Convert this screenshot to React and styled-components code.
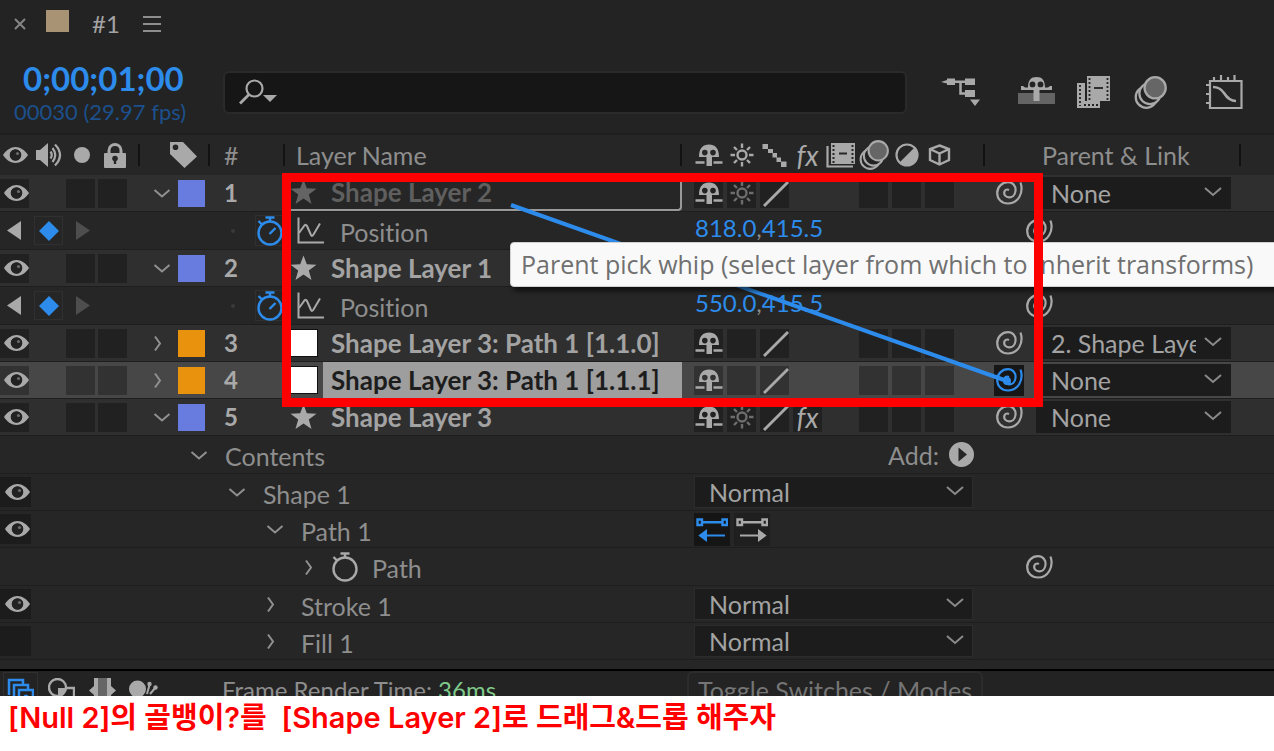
import { Fragment } from "react";
import styled, { createGlobalStyle, css } from "styled-components";

const COLORS = {
  panel: "#232323",
  layer: "#2f2f2f",
  property: "#262626",
  selected: "#474747",
  cell: "#212121",
  field: "#1c1c1c",
  line: "#1e1e1e",
  icon: "#a9a9a9",
  text: "#8e8e8e",
  name: "#a3a3a3",
  blue: "#2d8ceb",
  red: "#ff0000",
};

const GlobalStyle = createGlobalStyle`
  * {
    box-sizing: border-box;
  }

  body {
    margin: 0;
    background: #ffffff;
    font-family: Lato, "Liberation Sans", sans-serif;
    font-variant-ligatures: none;
  }

  button,
  input,
  select {
    margin: 0;
    padding: 0;
    border: 0;
    background: none;
    color: inherit;
    font: inherit;
  }

  svg {
    display: block;
    flex: none;
  }
`;

const Page = styled.main`
  overflow: hidden;
`;

const Panel = styled.section`
  position: relative;
  background: ${COLORS.panel};
  color: ${COLORS.text};
  font-size: 25px;
  line-height: 30px;
`;

const TabBar = styled.header`
  display: flex;
  align-items: center;
  height: 48px;
  padding-left: 14px;
`;

const CloseButton = styled.button`
  display: flex;
  width: 32px;
  color: #858585;
`;

const TabSwatch = styled.span`
  width: 23px;
  height: 22px;
  margin: 0 23px 6px 0;
  background: #a89474;
`;

const TabTitle = styled.h1`
  margin: 0 23px 0 0;
  font-size: 24px;
  font-weight: 400;
  line-height: 30px;
  color: ${COLORS.name};
`;

const Toolbar = styled.div`
  display: flex;
  align-items: center;
  height: 85px;
  padding: 3px 31px 0 0;
`;

const TimeBlock = styled.div`
  display: flex;
  flex-direction: column;
  width: 223px;
  padding: 2px 0 0 14px;
`;

const Timecode = styled.button`
  padding-left: 9px;
  font-size: 33px;
  font-weight: 700;
  line-height: 38px;
  text-align: left;
  color: ${COLORS.blue};
`;

const FrameInfo = styled.span`
  font-size: 22px;
  line-height: 30px;
  color: #1b508c;
`;

const SearchBox = styled.label`
  display: flex;
  align-items: center;
  flex: 1;
  height: 43px;
  padding-left: 14px;
  border: 2px solid #2a2a2a;
  border-radius: 6px;
  background: #161616;
  color: ${COLORS.icon};
`;

const SearchInput = styled.input`
  flex: 1;
  min-width: 0;
  margin-left: 8px;
  outline: none;
`;

const ToolGroup = styled.div`
  display: flex;
  align-items: center;
  gap: 27px;
  padding-left: 34px;
  color: ${COLORS.icon};
`;

const ToolSet = styled.div`
  display: flex;
`;

const ToolButton = styled.button`
  display: flex;
  justify-content: center;
  min-width: ${({ $wide }) => ($wide ? "57px" : "37px")};
`;

const Table = styled.table`
  display: block;
  padding-bottom: 9px;
  background: ${COLORS.property};

  thead,
  tbody {
    display: block;
  }
`;

const rowGrid = css`
  display: grid;
  grid-template-columns: 140px 70px 75px 397px 303px 256px 1fr;
`;

const HeadRow = styled.tr`
  ${rowGrid}
  height: 42px;
  border-top: 2px solid ${COLORS.line};
  color: ${COLORS.icon};
`;

const HeadCell = styled.th`
  display: flex;
  align-items: center;
  padding: 0 0 0 ${({ $pad }) => $pad || 0}px;
  font-weight: 400;
  text-align: left;
  color: ${({ $text }) => ($text ? COLORS.text : "inherit")};

  &::after {
    content: "";
    width: 2px;
    height: 22px;
    margin-left: auto;
    background: #121212;
  }
`;

const Row = styled.tr`
  ${rowGrid}
  height: ${({ $tall }) => ($tall ? 38 : 37)}px;
  border-bottom: 1px solid ${COLORS.line};
  background: ${({ $kind }) => COLORS[$kind]};
  color: ${({ $kind }) => ($kind === "property" ? COLORS.text : COLORS.icon)};
`;

const Cell = styled.td`
  display: flex;
  align-items: center;
  min-width: 0;
  padding: 0 0 0 ${({ $pad }) => $pad || 0}px;
  grid-column: span ${({ $span }) => $span || 1};
`;

const Slots = styled.div`
  display: grid;
  grid-template-columns: 32px 34px 32px 34px;
  align-items: center;
`;

const HeadSlot = styled.span`
  display: flex;
  justify-content: center;
`;

const Switch = styled.button`
  display: flex;
  align-items: center;
  justify-content: center;
  width: 29px;
  height: 29px;
  visibility: ${({ $hidden }) => ($hidden ? "hidden" : "visible")};
  background: ${({ $selected }) => ($selected ? "#323232" : COLORS.cell)};
  color: ${({ $dim }) => ($dim ? "#6d6d6d" : COLORS.icon)};
`;

const EyeSwitch = styled(Switch)`
  ${({ $large }) =>
    $large &&
    css`
      width: 31px;
      height: 30px;
      background: ${COLORS.field};
    `}
`;

const Switches = styled.div`
  display: grid;
  grid-template-columns: repeat(8, 29px);
  gap: 4px;
  align-items: center;
  justify-items: center;
`;

const FxMark = styled.span`
  font-size: 28px;
  font-style: italic;
  line-height: 28px;
`;

const Twirl = styled.button`
  display: flex;
  flex: none;
  width: ${({ $width }) => $width || 38}px;
  color: #909090;
`;

const LabelSwatch = styled.button`
  width: 27px;
  height: 27px;
  background: ${({ $color }) => $color};
`;

const LayerNumber = styled.span`
  font-size: 24px;
  font-weight: 700;
`;

const NameCell = styled(Cell)`
  align-items: stretch;
  ${({ $target }) =>
    $target &&
    css`
      border: solid #999999;
      border-width: 0 2px 2px 0;
      border-radius: 0 0 4px 0;
      background: ${COLORS.property};
      color: #646464;
    `}
`;

const NameIcon = styled.span`
  display: flex;
  align-items: center;
  width: 38px;
  padding-left: 5px;
`;

const LayerName = styled.span`
  display: flex;
  align-items: center;
  flex: 1;
  padding-left: 8px;
  font-size: 26px;
  font-weight: 700;
  white-space: nowrap;
  color: ${({ $target }) => ($target ? "#5f5f5f" : COLORS.name)};
  ${({ $selected }) =>
    $selected &&
    css`
      background: #9e9e9e;
      color: #1d1d1d;
    `}
`;

const NullSwatch = styled.span`
  width: 28px;
  height: 28px;
  border: 1px solid #111111;
  background: #ffffff;
`;

const KeyNav = styled.div`
  display: grid;
  grid-template-columns: 20px 29px 20px;
  gap: 10px;
  align-items: center;
`;

const KeyButton = styled.button`
  display: flex;
  align-items: center;
  justify-content: center;
  height: 29px;
  border: ${({ $framed }) => ($framed ? "1px solid #303030" : 0)};
  color: ${({ $color }) => $color || COLORS.icon};
`;

const Dot = styled.span`
  width: 4px;
  height: 4px;
  margin-right: 20px;
  border-radius: 2px;
  background: #3a3a3a;
`;

const WatchButton = styled.button`
  display: flex;
  align-items: center;
  justify-content: center;
  width: ${({ $framed }) => ($framed ? 30 : 26)}px;
  height: 31px;
  border: ${({ $framed }) => ($framed ? "1px solid #303030" : 0)};
  color: ${({ $active }) => ($active ? COLORS.blue : COLORS.icon)};
`;

const GraphButton = styled.button`
  display: flex;
  width: 43px;
  margin-left: 12px;
  color: ${COLORS.icon};
`;

const PropertyName = styled.span`
  padding: 3px 0 0 ${({ $pad }) => $pad || 0}px;
`;

const Values = styled.div`
  display: flex;
  padding-bottom: 6px;
  font-size: 24px;
  color: ${COLORS.text};
`;

const Value = styled.button`
  color: ${COLORS.blue};
`;

const AddButton = styled.button`
  display: flex;
  align-items: center;
  gap: 10px;
  margin-left: auto;
  margin-right: 11px;
`;

const WhipButton = styled.button`
  display: flex;
  align-items: center;
  justify-content: center;
  width: 30px;
  height: 31px;
  margin-right: 12px;
  color: ${({ $active }) => ($active ? COLORS.blue : COLORS.icon)};
  background: ${({ $active }) => ($active ? "#161616" : "none")};
`;

const SelectWrap = styled.div`
  position: relative;
  width: ${({ $width }) => $width}px;
  color: ${COLORS.name};

  svg {
    position: absolute;
    top: 10px;
    right: 9px;
    color: #8a8a8a;
    pointer-events: none;
  }
`;

const SelectField = styled.select`
  display: block;
  width: 100%;
  height: 32px;
  padding: 0 34px 0 14px;
  appearance: none;
  border: 1px solid ${({ $framed }) => ($framed ? "#2c2c2c" : COLORS.field)};
  background: ${COLORS.field};
  line-height: 28px;
  outline: none;
`;

const DirectionButton = styled.button`
  display: flex;
  align-items: center;
  justify-content: center;
  width: 36px;
  height: 33px;
  margin-right: 4px;
  background: ${({ $active }) => ($active ? "#151515" : "#1f1f1f")};
  color: ${({ $active }) => ($active ? COLORS.blue : COLORS.icon)};
`;

const Footer = styled.footer`
  display: flex;
  align-items: flex-start;
  height: 27px;
  overflow: hidden;
  border-top: 2px solid #000000;
  font-size: 24px;
`;

const FooterTools = styled.div`
  display: flex;
  gap: 6px;
  width: 222px;
  padding: 1px 0 0 3px;
  color: ${COLORS.icon};
`;

const FooterButton = styled.button`
  display: flex;
  justify-content: center;
  width: 35px;
  height: 36px;
  padding-top: 5px;
  border: 1px solid ${({ $active }) => ($active ? "#303030" : "transparent")};
  color: ${({ $active }) => ($active ? COLORS.blue : "inherit")};
`;

const RenderTime = styled.p`
  width: 465px;
  margin: 0;
  padding-top: 4px;

  output {
    color: #7fc98a;
  }
`;

const ToggleButton = styled.button`
  height: 40px;
  padding: 2px 9px 8px;
  border: 2px solid #2c2c2c;
  border-radius: 6px;
  font-size: 25px;
  white-space: nowrap;
  color: #757575;
`;

const DragLine = styled.svg`
  position: absolute;
  top: 173px;
  left: 282px;
  pointer-events: none;
`;

const Tooltip = styled.div`
  position: absolute;
  top: 242px;
  left: 510px;
  min-width: 780px;
  padding: 0 10px;
  border: 1px solid #d0d0d0;
  border-radius: 4px;
  background: #f9f9f9;
  box-shadow: 3px 4px 5px rgba(0, 0, 0, 0.6);
  font-family: "Open Sans", sans-serif;
  font-size: 25px;
  line-height: 43px;
  white-space: nowrap;
  color: #707070;
`;

const Highlight = styled.div`
  position: absolute;
  top: 173px;
  left: 282px;
  width: 761px;
  height: 234px;
  border: 9px solid ${COLORS.red};
  pointer-events: none;
`;

const Caption = styled.p`
  margin: 0;
  padding: 0 8px;
  font-family: Inter, "Noto Sans CJK KR", sans-serif;
  font-size: 29px;
  font-weight: 600;
  line-height: 44px;
  white-space: pre-wrap;
  color: ${COLORS.red};
`;

const EyeIcon = () => (
  <svg width="28" height="18" viewBox="0 0 28 18">
    <path
      fill="currentColor"
      fillRule="evenodd"
      d="M3 9C6 4 11 1 15.500 1S25 4 28 9C25 14 20 17 15.500 17S6 14 3 9ZM15.500 3.500A5.500 5.500 0 1 0 15.500 14.500A5.500 5.500 0 1 0 15.500 3.500Z"
    />
    <circle cx="15.500" cy="9" r="5.800" fill="#222222" />
    <circle cx="17.500" cy="7.500" r="1.600" fill="#6a6a6a" />
  </svg>
);

const SpeakerIcon = () => (
  <svg width="28" height="26" viewBox="0 0 28 26" fill="none" stroke="currentColor" strokeWidth="2.200">
    <path d="M1 8H5L13 1V25L5 18H1Z" fill="currentColor" stroke="none" />
    <path d="M15.500 9.500Q18 13 15.500 16.500" />
    <path d="M17.500 6Q23 13 17.500 20" />
    <path d="M20 2.500Q30 13 20 23.500" />
  </svg>
);

const SoloIcon = () => (
  <svg width="16" height="16" viewBox="0 0 16 16">
    <circle cx="8" cy="8" r="8" fill="currentColor" />
  </svg>
);

const LockIcon = () => (
  <svg width="22" height="25" viewBox="0 0 22 25">
    <path d="M5 11V7.500C5 -0.500 17 -0.500 17 7.500V11" fill="none" stroke="currentColor" strokeWidth="3" />
    <rect y="10" width="22" height="15" rx="1" fill="currentColor" />
    <circle cx="11" cy="15.500" r="2.800" fill="#262626" />
    <path d="M9.800 16H12.200V21H9.800Z" fill="#262626" />
  </svg>
);

const TagIcon = () => (
  <svg width="27" height="26" viewBox="0 0 27 26">
    <path
      fill="currentColor"
      fillRule="evenodd"
      d="M0 0H13L27 14.500L14.500 26L0 12ZM5.500 2.500A2.800 2.800 0 1 0 5.500 8.100A2.800 2.800 0 1 0 5.500 2.500Z"
    />
  </svg>
);

const ShyIcon = () => (
  <svg width="28" height="23" viewBox="0 0 28 23">
    <path
      fill="currentColor"
      fillRule="evenodd"
      d="M4 13C4 4 8 0.500 14 0.500S24 4 24 13H17V22H11.500V13ZM9.800 5.800A2.800 2.800 0 1 0 9.800 11.400A2.800 2.800 0 1 0 9.800 5.800ZM18 5.800A2.800 2.800 0 1 0 18 11.400A2.800 2.800 0 1 0 18 5.800Z"
    />
    <path d="M0.500 18.500H9.500M18.500 18.500H27.500" stroke="currentColor" strokeWidth="2.500" />
  </svg>
);

const SunIcon = () => (
  <svg width="24" height="24" viewBox="0 0 24 24" fill="none" stroke="currentColor" strokeWidth="2.400">
    <circle cx="12" cy="12" r="4.500" />
    <path d="M12 0.500V5M12 19V23.500M0.500 12H5M19 12H23.500M4 4L7 7M17 17L20 20M20 4L17 7M7 17L4 20" />
  </svg>
);

const QualityIcon = () => (
  <svg width="25" height="25" viewBox="0 0 25 25" fill="currentColor">
    <path d="M0.500 1H6V6H0.500ZM6 6H11V10H6ZM10.500 10H15V14.500H10.500ZM14.500 14.500H19V19H14.500ZM19 18.500H24.500V24H19Z" />
  </svg>
);

const SlashIcon = () => (
  <svg width="29" height="29" viewBox="0 0 29 29">
    <path d="M4 27L28 3" stroke="currentColor" strokeWidth="2.800" />
  </svg>
);

const FrameBlendIcon = () => (
  <svg width="29" height="26" viewBox="0 0 29 26">
    <path d="M1.500 4V24.500H27" fill="none" stroke="currentColor" strokeWidth="2.200" />
    <rect x="5" y="1" width="24" height="21" fill="currentColor" />
    <path d="M7.500 3V21M26.500 3V21" stroke="#262626" strokeWidth="2" strokeDasharray="2 2" />
    <path d="M13 11.500H21" stroke="#262626" strokeWidth="2" />
  </svg>
);

const MotionBlurIcon = ({ size = 30 }) => (
  <svg width={size} height={size} viewBox="0 0 32 32" stroke="currentColor" strokeWidth="2.200">
    <circle cx="12" cy="20.500" r="10.300" fill="#232323" />
    <circle cx="15.500" cy="17" r="10.300" fill="#232323" />
    <circle cx="20.500" cy="11.500" r="10.300" fill="#666666" />
  </svg>
);

const AdjustmentIcon = () => (
  <svg width="24" height="24" viewBox="0 0 24 24">
    <circle cx="12" cy="12" r="10.500" fill="none" stroke="currentColor" strokeWidth="2.200" />
    <path d="M19.500 4.500A10.600 10.600 0 0 1 4.500 19.500Z" fill="currentColor" />
  </svg>
);

const CubeIcon = () => (
  <svg width="23" height="22" viewBox="0 0 23 22" fill="none" stroke="currentColor" strokeWidth="2.400">
    <path d="M11.500 1.500L21 5V16L11.500 20.500L2 16V5ZM2 5L11.500 9.500L21 5M11.500 9.500V20.500" />
  </svg>
);

const TwirlIcon = ({ open }) => (
  <svg width="22" height="18" viewBox="0 0 22 18" fill="none" stroke="currentColor" strokeWidth="2">
    <path d={open ? "M4.500 6L12 12.500L19.500 6" : "M5 2.500L10 9.500L5 16.500"} />
  </svg>
);

const ChevronIcon = () => (
  <svg width="18" height="10" viewBox="0 0 18 10" fill="none" stroke="currentColor" strokeWidth="2">
    <path d="M1 1L9 8L17 1" />
  </svg>
);

const StarIcon = () => (
  <svg width="27" height="26" viewBox="0 0 27 26">
    <path
      d="M13.500 0.500L16.800 9.200L26.500 9.700L18.800 15.500L21.500 25L13.500 19.500L5.500 25L8.200 15.500L0.500 9.700L10.200 9.200Z"
      fill="currentColor"
    />
  </svg>
);

const WatchIcon = ({ running }) => (
  <svg width="26" height="30" viewBox="0 0 26 30" fill="none" stroke="currentColor" strokeWidth="2.400">
    <circle cx="13" cy="17" r="11.500" />
    <path d="M8.500 1.500H17.500M13 1.500V5.500M1.500 5L5 8.500" />
    {running && <path d="M12.500 18L18.500 12" />}
  </svg>
);

const GraphIcon = () => (
  <svg width="27" height="27" viewBox="0 0 27 27" fill="none" stroke="currentColor" strokeWidth="2">
    <path d="M1.500 0.500V25.500H27" />
    <path d="M2 16L7.500 8.500Q9 7 10 9L14 18Q15 20 16.500 17.500L23 6.500" />
  </svg>
);

const WhipIcon = () => (
  <svg width="27" height="24" viewBox="0 0 27 24" fill="none" stroke="currentColor" strokeWidth="2.200">
    <path d="M24.500 1.500C28 12 22 22.500 12 22.500C5.500 22.500 1.200 18 1.200 12C1.200 6 6 1.200 12 1.200C17 1.200 20 5 19.500 10C19 14.500 16 16.500 13 16.300C10 16 8 14 8.200 11.500C8.500 9 10.500 7.800 13 9" />
  </svg>
);

const PlayIcon = () => (
  <svg width="25" height="25" viewBox="0 0 25 25">
    <circle cx="12.500" cy="12.500" r="12.500" fill={COLORS.icon} />
    <path d="M9.500 5.500L18 12.500L9.500 19.500Z" fill="#262626" />
  </svg>
);

const DirectionIcon = ({ reverse }) => (
  <svg width="32" height="25" viewBox="0 0 32 25" fill="none" stroke="currentColor" strokeWidth="2.400">
    <path d="M1.500 2.500H6V8H1.500ZM26.500 2.500H31V8H26.500ZM6 5.200H26.500" />
    {reverse ? (
      <path d="M4 18.500L10 14V23ZM10 18.500H29" fill="currentColor" strokeWidth="2" />
    ) : (
      <path d="M29 18.500L23 14V23ZM22 18.500H4" fill="currentColor" strokeWidth="2" />
    )}
  </svg>
);

const MenuIcon = () => (
  <svg width="18" height="18" viewBox="0 0 18 18" stroke="currentColor" strokeWidth="2">
    <path d="M0 2H18M0 9H18M0 16H18" />
  </svg>
);

const CloseIcon = () => (
  <svg width="12" height="12" viewBox="0 0 12 12" stroke="currentColor" strokeWidth="2">
    <path d="M1 1L11 11M11 1L1 11" />
  </svg>
);

const SearchIcon = () => (
  <svg width="38" height="26" viewBox="0 0 38 26">
    <circle cx="15.500" cy="9.500" r="8" fill="none" stroke="currentColor" strokeWidth="2.200" />
    <path d="M10 15.500L1 24.500" stroke="currentColor" strokeWidth="2.800" />
    <path d="M24 16H38L31 23Z" fill="currentColor" />
  </svg>
);

const FlowIcon = () => (
  <svg width="40" height="30" viewBox="0 0 40 30" fill="currentColor">
    <path d="M0 5L6 3V1.500H14V8H6V6.500ZM24 1.500H34V8H24ZM24 13H34V20H24ZM29 22.500H39L34 29Z" />
    <path d="M14 4.700H24M19.500 4.700V16.500H24" fill="none" stroke="currentColor" strokeWidth="2.500" />
  </svg>
);

const HideShyIcon = () => (
  <svg width="37" height="28" viewBox="0 0 37 28">
    <rect y="17" width="37" height="11" fill="#646464" />
    <path
      fill="currentColor"
      fillRule="evenodd"
      d="M3 10H5L7 11.500H10C10 4 13 1 18.500 1S27 4 27 11.500H30L32 10H34V14H21.500V25H15.500V14H3ZM14.500 5.500A2.900 2.900 0 1 0 14.500 11.300A2.900 2.900 0 1 0 14.500 5.500ZM22.500 5.500A2.900 2.900 0 1 0 22.500 11.300A2.900 2.900 0 1 0 22.500 5.500Z"
    />
  </svg>
);

const FramesIcon = () => (
  <svg width="33" height="32" viewBox="0 0 33 32">
    <path d="M0 7H8V25H23V32H0Z" fill="currentColor" />
    <path d="M3 9V30M7 29H21" stroke="#232323" strokeWidth="1.800" strokeDasharray="2 2" />
    <rect x="10" y="0" width="23" height="25" fill="currentColor" />
    <path d="M12.500 2V24M30.500 2V24" stroke="#232323" strokeWidth="1.800" strokeDasharray="2 2" />
    <path d="M17 12H26" stroke="#232323" strokeWidth="1.800" />
  </svg>
);

const GraphEditorIcon = () => (
  <svg width="37" height="35" viewBox="0 0 37 35" fill="none" stroke="currentColor" strokeWidth="2.200">
    <path d="M4 6H35.500V33H4Z" />
    <path d="M0 10H4M0 19H4M0 28H4M8 2V6M15 0V6M22 2V6M28.500 0V6" />
    <path d="M7 12Q14 12 18 18Q23 26 30 26" strokeWidth="2.600" />
  </svg>
);

const LayersIcon = () => (
  <svg width="27" height="28" viewBox="0 0 27 28" fill="none" stroke="currentColor" strokeWidth="2.500">
    <path d="M2 17V2H16V6M7 22V7H21V11" />
    <path d="M12 26V12H26V26Z" />
    <circle cx="19" cy="19" r="2.500" fill="currentColor" stroke="none" />
  </svg>
);

const ModesIcon = () => (
  <svg width="27" height="28" viewBox="0 0 27 28" fill="none" stroke="currentColor" strokeWidth="2.400">
    <circle cx="9.500" cy="9.500" r="8.500" />
    <path d="M18 10H26V26H10V18" />
    <path d="M10 10H18Q18 17 10 18Z" fill="currentColor" stroke="none" />
  </svg>
);

const BracesIcon = () => (
  <svg width="27" height="28" viewBox="0 0 27 28">
    <path d="M8 0H19V28H8Z" fill="#666666" />
    <path d="M5 0H9V27H5V17L0 12.500L5 8ZM22 0H18V27H22V17L27 12.500L22 8Z" fill="currentColor" />
  </svg>
);

const RenderIcon = () => (
  <svg width="29" height="28" viewBox="0 0 29 28" fill="currentColor">
    <circle cx="8.500" cy="11" r="8.500" />
    <path d="M14 18H24V26H14Z" />
    <path d="M18 16L20.500 7M21 16L27 9" stroke="currentColor" strokeWidth="2" />
    <circle cx="20.500" cy="6" r="2.200" />
    <circle cx="26.500" cy="9.500" r="2.200" />
  </svg>
);

const VIOLET = "#687bdf";
const ORANGE = "#e8920e";

const LAYERS = [
  {
    id: 1,
    name: "Shape Layer 2",
    color: VIOLET,
    icon: "star",
    open: true,
    target: true,
    switches: ["shy", "sunDim", "slash"],
    parent: "None",
    position: ["818.0", "415.5"],
  },
  {
    id: 2,
    name: "Shape Layer 1",
    color: VIOLET,
    icon: "star",
    open: true,
    switches: ["shy", "sunDim", "slash"],
    parent: "None",
    position: ["550.0", "415.5"],
  },
  {
    id: 3,
    name: "Shape Layer 3: Path 1 [1.1.0]",
    color: ORANGE,
    icon: "null",
    switches: ["shy", "empty", "slash"],
    parent: "2. Shape Layer 1",
  },
  {
    id: 4,
    name: "Shape Layer 3: Path 1 [1.1.1]",
    color: ORANGE,
    icon: "null",
    selected: true,
    switches: ["shy", "empty", "slash"],
    parent: "None",
  },
  {
    id: 5,
    name: "Shape Layer 3",
    color: VIOLET,
    icon: "star",
    open: true,
    switches: ["shy", "sunDim", "slash", "fx"],
    parent: "None",
  },
];

const OUTLINE = [
  { name: "Contents", depth: 0, open: true, control: "add" },
  { name: "Shape 1", depth: 1, open: true, eye: "on", control: "blend" },
  { name: "Path 1", depth: 2, open: true, eye: "on", control: "direction" },
  { name: "Path", depth: 3, watch: true, whip: true },
  { name: "Stroke 1", depth: 2, eye: "on", control: "blend" },
  { name: "Fill 1", depth: 2, eye: "off", control: "blend" },
];

const SWITCH_ICONS = {
  shy: <ShyIcon />,
  sunDim: <SunIcon />,
  slash: <SlashIcon />,
  fx: <FxMark>fx</FxMark>,
};

const Dropdown = ({ label, value, width, framed }) => (
  <SelectWrap $width={width}>
    <SelectField aria-label={label} defaultValue={value} $framed={framed}>
      <option>{value}</option>
    </SelectField>
    <ChevronIcon />
  </SelectWrap>
);

const LayerSwitches = ({ switches, selected }) => {
  const slots = [0, 1, 2, 3, 4, 5, 6, 7];

  return (
    <Switches>
      {slots.map((slot) => {
        const name = switches[slot];
        return (
          <Switch
            key={slot}
            type="button"
            aria-label={`Switch ${slot + 1}`}
            $selected={selected}
            $dim={name === "sunDim"}
            $hidden={!name && slot < 5}
          >
            {SWITCH_ICONS[name]}
          </Switch>
        );
      })}
    </Switches>
  );
};

const LayerRow = ({ layer }) => {
  const { id, name, color, icon, open, target, selected, switches, parent } = layer;

  return (
    <Row $kind={selected ? "selected" : "layer"}>
      <Cell>
        <Slots>
          <EyeSwitch type="button" aria-label="Visible" $selected={selected}>
            <EyeIcon />
          </EyeSwitch>
          <span />
          <Switch type="button" aria-label="Solo" $selected={selected} />
          <Switch type="button" aria-label="Lock" $selected={selected} />
        </Slots>
      </Cell>
      <Cell $pad={10}>
        <Twirl type="button" aria-label="Expand layer" $width={28}>
          <TwirlIcon open={open} />
        </Twirl>
        <LabelSwatch type="button" aria-label="Label color" $color={color} />
      </Cell>
      <Cell $pad={14}>
        <LayerNumber>{id}</LayerNumber>
      </Cell>
      <NameCell $target={target}>
        <NameIcon>{icon === "star" ? <StarIcon /> : <NullSwatch />}</NameIcon>
        <LayerName $target={target} $selected={selected}>
          {name}
        </LayerName>
      </NameCell>
      <Cell $pad={12}>
        <LayerSwitches switches={switches} selected={selected} />
      </Cell>
      <Cell $pad={9}>
        <WhipButton type="button" aria-label="Parent pick whip" $active={selected}>
          <WhipIcon />
        </WhipButton>
        <Dropdown label={`Parent of ${name}`} value={parent} width={195} />
      </Cell>
    </Row>
  );
};

const PositionRow = ({ values }) => (
  <Row $kind="property" $tall>
    <Cell $pad={4}>
      <KeyNav>
        <KeyButton type="button" aria-label="Previous keyframe">
          <svg width="14" height="19" viewBox="0 0 14 19">
            <path d="M14 0V19L0 9.500Z" fill="currentColor" />
          </svg>
        </KeyButton>
        <KeyButton type="button" aria-label="Toggle keyframe" $framed $color={COLORS.blue}>
          <svg width="20" height="20" viewBox="0 0 20 20">
            <path d="M10 0L20 10L10 20L0 10Z" fill="currentColor" />
          </svg>
        </KeyButton>
        <KeyButton type="button" aria-label="Next keyframe" $color="#4e4e4e">
          <svg width="14" height="19" viewBox="0 0 14 19">
            <path d="M0 0V19L14 9.500Z" fill="currentColor" />
          </svg>
        </KeyButton>
      </KeyNav>
    </Cell>
    <Cell $span={3} $pad={91}>
      <Dot />
      <WatchButton type="button" aria-label="Animate" $active $framed>
        <WatchIcon running />
      </WatchButton>
      <GraphButton type="button" aria-label="Show graph">
        <GraphIcon />
      </GraphButton>
      <PropertyName>Position</PropertyName>
    </Cell>
    <Cell $pad={13}>
      <Values>
        <Value type="button">{values[0]}</Value>,<Value type="button">{values[1]}</Value>
      </Values>
    </Cell>
    <Cell $pad={39}>
      <WhipButton type="button" aria-label="Property pick whip">
        <WhipIcon />
      </WhipButton>
    </Cell>
  </Row>
);

const OutlineControl = ({ control, name }) => {
  if (control === "add") {
    return (
      <AddButton type="button">
        Add: <PlayIcon />
      </AddButton>
    );
  }
  if (control === "blend") {
    return <Dropdown label={`Blend mode of ${name}`} value="Normal" width={279} framed />;
  }
  if (control === "direction") {
    return (
      <Fragment>
        <DirectionButton type="button" aria-label="Reverse path direction off" $active>
          <DirectionIcon reverse />
        </DirectionButton>
        <DirectionButton type="button" aria-label="Reverse path direction on">
          <DirectionIcon />
        </DirectionButton>
      </Fragment>
    );
  }
  return null;
};

const OutlineRow = ({ item }) => {
  const { name, depth, open, eye, watch, whip, control } = item;

  return (
    <Row $kind="property" $tall={!eye}>
      <Cell>
        {eye && (
          <EyeSwitch type="button" aria-label={`Show ${name}`} $large>
            {eye === "on" && <EyeIcon />}
          </EyeSwitch>
        )}
      </Cell>
      <Cell $span={3} $pad={47 + depth * 38}>
        <Twirl type="button" aria-label={`Expand ${name}`} $width={watch ? 31 : 38}>
          <TwirlIcon open={open} />
        </Twirl>
        {watch && (
          <WatchButton type="button" aria-label="Animate">
            <WatchIcon />
          </WatchButton>
        )}
        <PropertyName $pad={watch ? 14 : 0}>{name}</PropertyName>
      </Cell>
      <Cell $pad={12}>
        <OutlineControl control={control} name={name} />
      </Cell>
      <Cell $pad={39}>
        {whip && (
          <WhipButton type="button" aria-label="Property pick whip">
            <WhipIcon />
          </WhipButton>
        )}
      </Cell>
    </Row>
  );
};

const TimelineHead = () => (
  <thead>
    <HeadRow>
      <HeadCell>
        <Slots>
          <EyeIcon />
          <HeadSlot>
            <SpeakerIcon />
          </HeadSlot>
          <HeadSlot>
            <SoloIcon />
          </HeadSlot>
          <HeadSlot>
            <LockIcon />
          </HeadSlot>
        </Slots>
      </HeadCell>
      <HeadCell $pad={30}>
        <TagIcon />
      </HeadCell>
      <HeadCell $pad={14} $text>
        #
      </HeadCell>
      <HeadCell $pad={11} $text>
        Layer Name
      </HeadCell>
      <HeadCell $pad={12}>
        <Switches>
          <ShyIcon />
          <SunIcon />
          <QualityIcon />
          <FxMark>fx</FxMark>
          <FrameBlendIcon />
          <MotionBlurIcon />
          <AdjustmentIcon />
          <CubeIcon />
        </Switches>
      </HeadCell>
      <HeadCell $pad={57} $text>
        Parent &amp; Link
      </HeadCell>
    </HeadRow>
  </thead>
);

const App = () => {
  return (
    <Page>
      <GlobalStyle />
      <Panel>
        <TabBar>
          <CloseButton type="button" aria-label="Close tab">
            <CloseIcon />
          </CloseButton>
          <TabSwatch />
          <TabTitle>#1</TabTitle>
          <button type="button" aria-label="Panel menu">
            <MenuIcon />
          </button>
        </TabBar>
        <Toolbar>
          <TimeBlock>
            <Timecode type="button">0;00;01;00</Timecode>
            <FrameInfo>00030 (29.97 fps)</FrameInfo>
          </TimeBlock>
          <SearchBox>
            <SearchIcon />
            <SearchInput type="text" aria-label="Search layers" />
          </SearchBox>
          <ToolGroup>
            <ToolButton type="button" aria-label="Mini-flowchart">
              <FlowIcon />
            </ToolButton>
            <ToolSet>
              <ToolButton type="button" aria-label="Hide shy layers" $wide>
                <HideShyIcon />
              </ToolButton>
              <ToolButton type="button" aria-label="Frame blending" $wide>
                <FramesIcon />
              </ToolButton>
              <ToolButton type="button" aria-label="Motion blur" $wide>
                <MotionBlurIcon size={33} />
              </ToolButton>
            </ToolSet>
            <ToolButton type="button" aria-label="Graph editor">
              <GraphEditorIcon />
            </ToolButton>
          </ToolGroup>
        </Toolbar>
        <Table>
          <TimelineHead />
          <tbody>
            {LAYERS.map((layer) => (
              <Fragment key={layer.id}>
                <LayerRow layer={layer} />
                {layer.position && <PositionRow values={layer.position} />}
              </Fragment>
            ))}
            {OUTLINE.map((item) => (
              <OutlineRow key={item.name} item={item} />
            ))}
          </tbody>
        </Table>
        <Footer>
          <FooterTools>
            <FooterButton type="button" aria-label="Layer switches" $active>
              <LayersIcon />
            </FooterButton>
            <FooterButton type="button" aria-label="Transfer controls">
              <ModesIcon />
            </FooterButton>
            <FooterButton type="button" aria-label="In and out points">
              <BracesIcon />
            </FooterButton>
            <FooterButton type="button" aria-label="Render time">
              <RenderIcon />
            </FooterButton>
          </FooterTools>
          <RenderTime>
            Frame Render Time: <output>36ms</output>
          </RenderTime>
          <ToggleButton type="button">Toggle Switches / Modes</ToggleButton>
        </Footer>
        <DragLine width="761" height="234" viewBox="0 0 761 234">
          <path d="M229 32L725 208" stroke={COLORS.blue} strokeWidth="4" />
          <circle cx="725" cy="208" r="4" fill={COLORS.blue} />
        </DragLine>
        <Tooltip role="tooltip">
          Parent pick whip (select layer from which to inherit transforms)
        </Tooltip>
        <Highlight />
      </Panel>
      <Caption>[Null 2]의 골뱅이?를  [Shape Layer 2]로 드래그&amp;드롭 해주자</Caption>
    </Page>
  );
};

export default App;
